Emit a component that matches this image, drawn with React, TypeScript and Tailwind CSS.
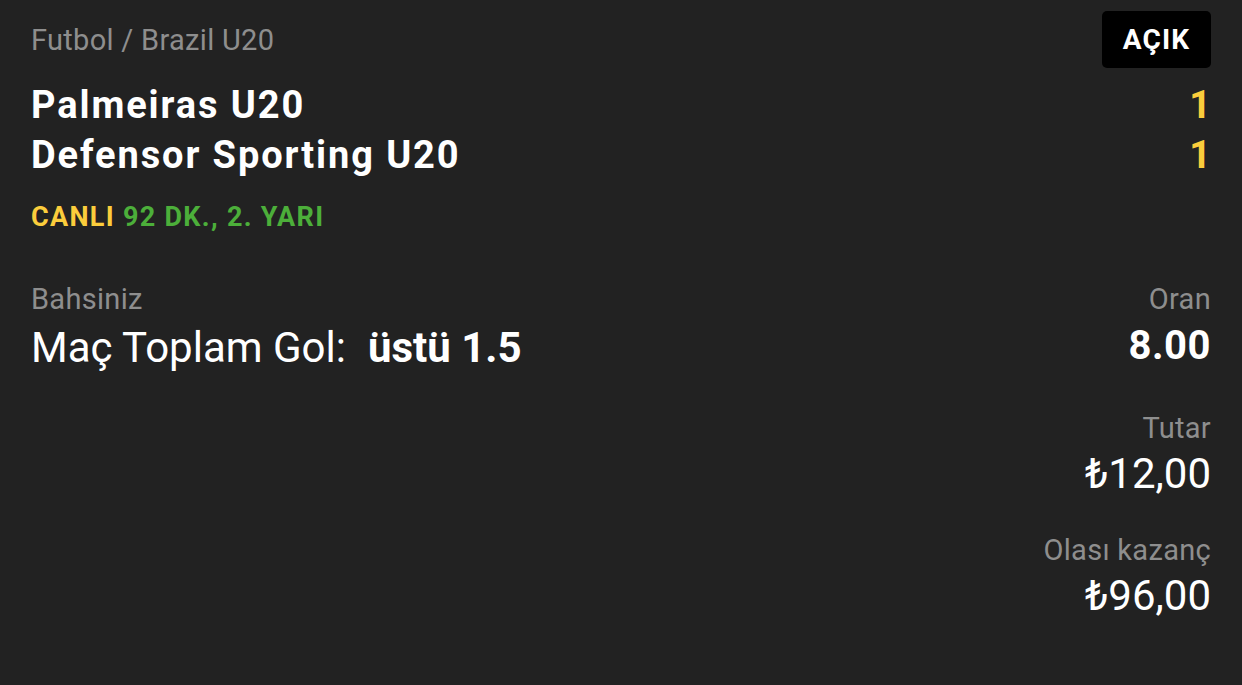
export default function App() {
  return (
    <div className="w-[1242px] h-[685px] bg-[#222222] text-white font-['Roboto',sans-serif] pl-[31px] pr-[31px] pt-[11px] overflow-hidden">
      {/* Header */}
      <div className="flex items-center justify-between">
        <div className="text-[29px] leading-[36px] tracking-[0.3px] text-[#8e8e8e]">Futbol / Brazil U20</div>
        <div className="h-[57px] w-[109px] bg-black rounded-[5px] flex items-center justify-center text-[28px] tracking-[1.2px] font-bold">
          AÇIK
        </div>
      </div>

      {/* Teams */}
      <div className="mt-[12px] text-[38px] leading-[50px] tracking-[1.9px] font-bold">
        <div className="flex justify-between">
          <span>Palmeiras U20</span>
          <span className="text-[#fbcd3c] tracking-normal">1</span>
        </div>
        <div className="flex justify-between">
          <span>Defensor Sporting U20</span>
          <span className="text-[#fbcd3c] tracking-normal">1</span>
        </div>
      </div>

      <div className="mt-[19px] text-[27px] leading-[36px] tracking-[1.3px] font-bold">
        <span className="text-[#fbcd3c]">CANLI</span>{' '}
        <span className="text-[#4caf3a]">92 DK., 2. YARI</span>
      </div>

      {/* Bet */}
      <div className="mt-[46px] flex justify-between">
        <div>
          <div className="text-[29px] leading-[36px] tracking-[0.3px] text-[#8e8e8e]">Bahsiniz</div>
          <div className="mt-[5px] text-[42px] leading-[52px]">
            Maç Toplam Gol:<span className="ml-[22px] font-bold">üstü 1.5</span>
          </div>
        </div>
        <div className="flex flex-col items-end">
          <div className="text-[29px] leading-[36px] tracking-[0.3px] text-[#8e8e8e]">Oran</div>
          <div className="mt-[3px] text-[40px] leading-[52px] tracking-[0.5px] font-bold">8.00</div>
          <div className="mt-[38px] text-[29px] leading-[36px] tracking-[0.3px] text-[#8e8e8e]">Tutar</div>
          <div className="mt-[2px] text-[42px] leading-[52px]">₺12,00</div>
          <div className="mt-[32px] text-[29px] leading-[36px] tracking-[0.3px] text-[#8e8e8e]">Olası kazanç</div>
          <div className="mt-[2px] text-[42px] leading-[52px]">₺96,00</div>
        </div>
      </div>
    </div>
  );
}
